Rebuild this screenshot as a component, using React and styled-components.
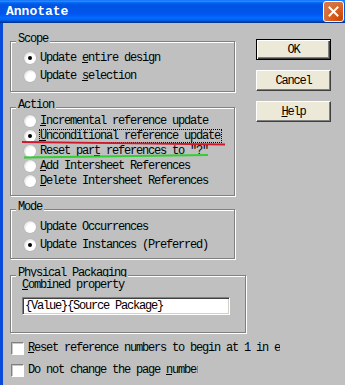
import React from "react";
import styled, { createGlobalStyle } from "styled-components";

const Global = createGlobalStyle`
  html, body { margin: 0; padding: 0; background: #c0c0c0; }
`;

const Window = styled.div`
  width: 345px;
  height: 385px;
  display: flex;
  flex-direction: column;
  background: #c0c0c0;
  overflow: hidden;
  font-family: "Liberation Mono", "Courier New", monospace;
  font-size: 12px;
  letter-spacing: -1.2px;
  color: #000;
`;

const TitleBar = styled.div`
  height: 23px;
  flex: none;
  display: flex;
  align-items: flex-start;
  justify-content: space-between;
  padding-left: 6px;
  background: linear-gradient(
    to bottom,
    #0058ee 0%,
    #3593ff 4%,
    #288eff 6%,
    #127dff 8%,
    #036ffc 10%,
    #0262ee 14%,
    #0057e5 20%,
    #0054e3 24%,
    #0055eb 56%,
    #005bf5 66%,
    #026afe 76%,
    #0062ef 86%,
    #0052d6 92%,
    #0040ab 94%,
    #003092 100%
  );
`;

const Title = styled.span`
  font-weight: bold;
  font-size: 13px;
  letter-spacing: 0;
  color: #fff;
  line-height: 23px;
`;

const CloseButton = styled.div`
  width: 19px;
  height: 19px;
  margin-top: 1px;
  margin-right: 1px;
  border: 1px solid #fff;
  border-radius: 3px;
  background: radial-gradient(circle at 90% 90%, #cc4600 0%, #dc6527 55%, #cd7546 70%, #e76f3c 100%);
  display: flex;
  align-items: center;
  justify-content: center;
`;

const Body = styled.div`
  flex: 1;
  display: flex;
  border-left: 3px solid #0a4ad8;
`;

const LeftColumn = styled.div`
  width: 226px;
  flex: none;
  margin-left: 7px;
  padding-top: 18px;
  display: flex;
  flex-direction: column;
`;

const RightColumn = styled.div`
  margin-left: 20px;
  padding-top: 16px;
  display: flex;
  flex-direction: column;
  gap: 10px;
`;

const Group = styled.div`
  position: relative;
  width: 223px;
  margin-top: ${(p) => p.$mt || 0}px;
  padding: ${(p) => p.$pad};
  border: 1px solid #808080;
  box-shadow: inset 1px 1px 0 #fff, 1px 1px 0 #fff;
`;

const Legend = styled.div`
  position: absolute;
  top: -9px;
  left: 5px;
  padding: 0 2px;
  height: ${(p) => (p.$clip ? "10px" : "12px")};
  overflow: hidden;
  line-height: 12px;
  background: #c0c0c0;
`;

const RadioRow = styled.div`
  height: ${(p) => p.$h}px;
  display: flex;
  align-items: center;
  padding-left: 13px;
  gap: 4px;
  white-space: nowrap;
`;

const Radio = styled.span`
  width: 12px;
  height: 12px;
  flex: none;
  border-radius: 50%;
  background: radial-gradient(circle at 62% 62%, #fff 45%, #e4e4e4 70%, #a8a8a8 100%);
  box-shadow: 0 0 0 0.5px #b0b0b0;
  display: flex;
  align-items: center;
  justify-content: center;
  &::after {
    content: "";
    width: 4px;
    height: 4px;
    border-radius: 50%;
    background: ${(p) => (p.$checked ? "#000" : "transparent")};
  }
`;

const Label = styled.span`
  line-height: 12px;
  padding: 0 1px 0 0;
  border: 1px ${(p) => (p.$focus ? "dotted #000" : "solid transparent")};
  margin-left: -1px;
`;

const U = styled.span`
  text-decoration: underline;
  text-underline-offset: 1px;
`;

const FieldLabel = styled.div`
  line-height: 12px;
`;

const TextInput = styled.div`
  margin-top: 6px;
  width: 204px;
  height: 16px;
  padding: 0 0 0 2px;
  line-height: 16px;
  background: #fff;
  border: 1px solid;
  border-color: #808080 #fff #fff #808080;
  box-shadow: inset 1px 1px 0 #404040, inset -1px -1px 0 #d4d0c8;
  white-space: nowrap;
`;

const CheckRow = styled.div`
  display: flex;
  align-items: center;
  gap: 4px;
  height: 13px;
  margin-left: 1px;
  margin-top: ${(p) => p.$mt}px;
`;

const CheckBox = styled.span`
  width: 11px;
  height: 11px;
  flex: none;
  background: #fff;
  border: 1px solid;
  border-color: #808080 #fff #fff #808080;
  box-shadow: inset 1px 1px 0 #c8c8c8;
`;

const CheckText = styled.span`
  flex: none;
  width: ${(p) => p.$w}px;
  overflow: hidden;
  white-space: nowrap;
  line-height: 13px;
`;

const Button = styled.div`
  width: 75px;
  height: 21px;
  box-sizing: border-box;
  background: #ece9d8;
  display: flex;
  align-items: center;
  justify-content: center;
  line-height: 12px;
  border: 1px solid;
  border-color: ${(p) => (p.$default ? "#000" : "#fff #404040 #404040 #fff")};
  box-shadow: ${(p) =>
    p.$default
      ? "inset 1px 1px 0 #fff, inset -1px -1px 0 #404040, inset -2px -2px 0 #808080"
      : "inset -1px -1px 0 #808080"};
`;

const Scribble = styled.svg`
  position: absolute;
  left: 0;
  top: 0;
  width: 100%;
  height: 100%;
  overflow: visible;
  pointer-events: none;
`;

function RadioOption({ h, checked, focus, children }) {
  return (
    <RadioRow $h={h}>
      <Radio $checked={checked} />
      <Label $focus={focus}>{children}</Label>
    </RadioRow>
  );
}

export default function App() {
  return (
    <>
      <Global />
      <Window>
        <TitleBar>
          <Title>Annotate</Title>
          <CloseButton>
            <svg width="11" height="11" viewBox="0 0 11 11">
              <path d="M1.5 1.5 L9.5 9.5 M9.5 1.5 L1.5 9.5" stroke="#fff" strokeWidth="2" strokeLinecap="square" />
            </svg>
          </CloseButton>
        </TitleBar>
        <Body>
          <LeftColumn>
            <Group $pad="7px 0 6px 0">
              <Legend>Scope</Legend>
              <RadioOption h={18} checked>
                Update <U>e</U>ntire design
              </RadioOption>
              <RadioOption h={18}>
                Update <U>s</U>election
              </RadioOption>
            </Group>

            <Group $mt={15} $pad="5px 0 7px 0">
              <Legend>Action</Legend>
              <RadioOption h={15}>
                <U>I</U>ncremental reference update
              </RadioOption>
              <RadioOption h={15} checked focus>
                <U>U</U>nconditional reference update
              </RadioOption>
              <RadioOption h={15}>
                Reset par<U>t</U> references to "?"
              </RadioOption>
              <RadioOption h={15}>
                <U>A</U>dd Intersheet References
              </RadioOption>
              <RadioOption h={15}>
                <U>D</U>elete Intersheet References
              </RadioOption>
              <Scribble>
                <path d="M11 34 C 70 35, 150 35.5, 214 36.5" stroke="#d0182c" strokeWidth="1.8" fill="none" />
                <path d="M13 49.5 C 70 48.5, 140 48, 197 47" stroke="#2fd02f" strokeWidth="1.8" fill="none" />
              </Scribble>
            </Group>

            <Group $mt={13} $pad="8px 0 4px 0">
              <Legend>Mode</Legend>
              <RadioOption h={18}>Update Occurrences</RadioOption>
              <RadioOption h={18} checked>
                Update Instances (Preferred)
              </RadioOption>
            </Group>

            <Group $mt={16} $pad="3px 0 17px 11px">
              <Legend $clip>Physical Packaging</Legend>
              <FieldLabel>
                <U>C</U>ombined property
              </FieldLabel>
              <TextInput>{"{Value}{Source Package}"}</TextInput>
            </Group>

            <CheckRow $mt={9}>
              <CheckBox />
              <CheckText $w={252}>
                <U>R</U>eset reference numbers to begin at 1 in each sheet
              </CheckText>
            </CheckRow>
            <CheckRow $mt={9}>
              <CheckBox />
              <CheckText $w={170}>
                Do not change the page <U>n</U>umber
              </CheckText>
            </CheckRow>
          </LeftColumn>

          <RightColumn>
            <Button $default>OK</Button>
            <Button>Cancel</Button>
            <Button>
              <span>
                <U>H</U>elp
              </span>
            </Button>
          </RightColumn>
        </Body>
      </Window>
    </>
  );
}
